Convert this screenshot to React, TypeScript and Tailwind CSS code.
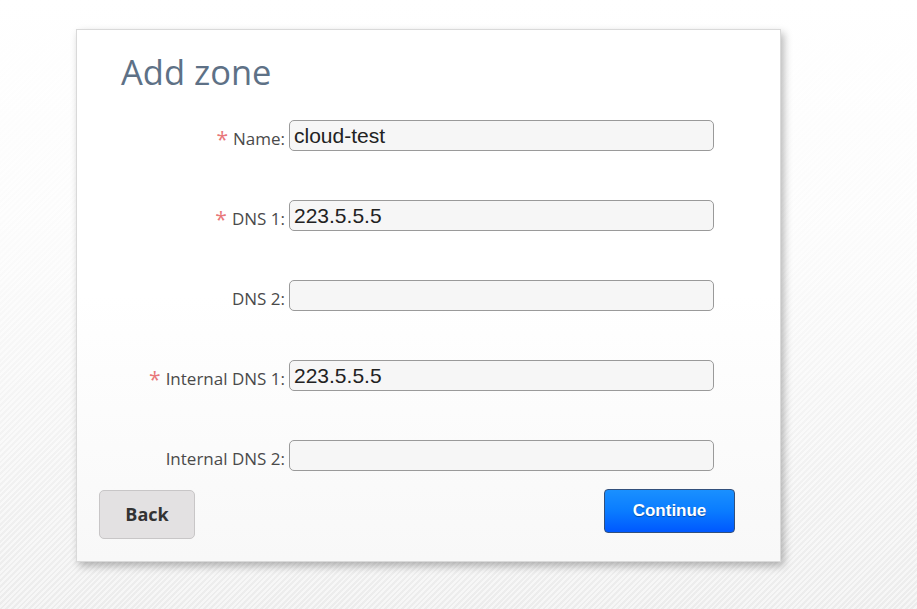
const rows = [
  { label: "Name:", required: true, value: "cloud-test" },
  { label: "DNS 1:", required: true, value: "223.5.5.5" },
  { label: "DNS 2:", required: false, value: "" },
  { label: "Internal DNS 1:", required: true, value: "223.5.5.5" },
  { label: "Internal DNS 2:", required: false, value: "" },
];

export default function App() {
  return (
    <div className="min-h-screen w-full bg-[repeating-linear-gradient(135deg,rgba(255,255,255,0.55)_0px,rgba(255,255,255,0.55)_2px,transparent_2px,transparent_4px),linear-gradient(180deg,#ffffff_0%,#fbfbfb_40%,#ececec_100%)] pt-[29px] pl-[76px] font-['Open_Sans',sans-serif]">
      <div className="flex h-[533px] w-[705px] flex-col border border-[#d9d9d9] bg-[linear-gradient(180deg,#ffffff_0%,#ffffff_50%,#f8f8f8_100%)] shadow-[3px_4px_8px_rgba(0,0,0,0.28)]">
        {/* Title */}
        <h1 className="mt-[20px] pl-[44px] text-[34.5px] leading-[44px] text-[#5e7186]">
          Add zone
        </h1>

        {/* Form */}
        <div className="mt-[26px] flex flex-col gap-[49px]">
          {rows.map((r) => (
            <div key={r.label} className="flex items-end">
              <div className="flex w-[212px] items-end justify-end pr-[4px] pb-[2px] text-[17px] leading-[20px] text-[#4a4a4a]">
                {r.required && (
                  <span className="mr-[5px] text-[21px] leading-[20px] text-[#e8777a]">*</span>
                )}
                <span>{r.label}</span>
              </div>
              <input
                readOnly
                value={r.value}
                className="h-[31px] w-[425px] rounded-[5px] border border-[#9a9a9a] bg-[#f6f6f6] px-[4px] font-['Liberation_Sans',Arial,sans-serif] text-[21px] text-[#222] outline-none"
              />
            </div>
          ))}
        </div>

        {/* Buttons */}
        <div className="mt-[18px] flex items-start justify-between pl-[22px] pr-[45px]">
          <button className="mt-[1px] h-[49px] w-[96px] rounded-[5px] border border-[#c8c6c7] bg-[#e3e1e2] text-[18px] font-bold text-[#333]">
            Back
          </button>
          <button className="h-[44px] w-[131px] rounded-[4px] border border-[#32507c] bg-[linear-gradient(180deg,#1a90ff_0%,#0a7cff_50%,#0058ff_100%)] font-['Liberation_Sans',Arial,sans-serif] text-[17px] font-bold text-white [text-shadow:0_1px_1px_rgba(0,0,0,0.35)]">
            Continue
          </button>
        </div>
      </div>
    </div>
  );
}
